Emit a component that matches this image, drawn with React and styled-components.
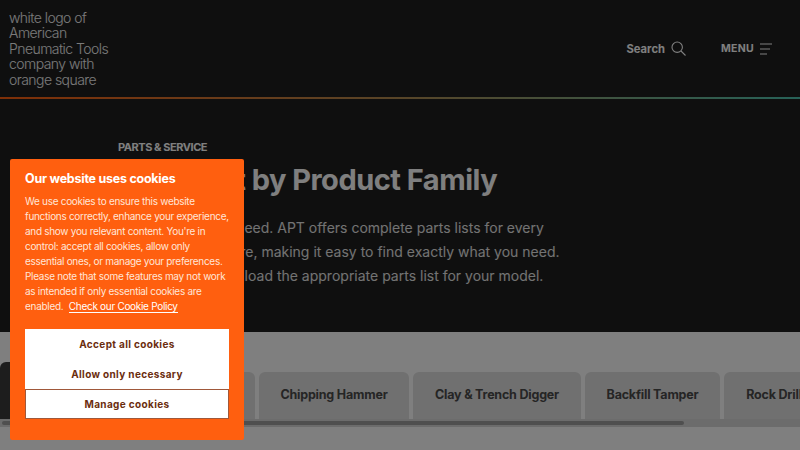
import React from "react";
import styled, { createGlobalStyle } from "styled-components";

const GlobalStyle = createGlobalStyle`
  html, body {
    margin: 0;
    padding: 0;
    height: 100%;
    overflow: hidden;
    background: #1f1f1f;
    font-family: "Inter", "Liberation Sans", sans-serif;
  }
`;

const tabs = [
  { label: "Breaker", width: 150, active: true },
  { label: "Rock Drill", width: 101 },
  { label: "Chipping Hammer", width: 150 },
  { label: "Clay & Trench Digger", width: 168 },
  { label: "Backfill Tamper", width: 135 },
  { label: "Rock Drill", width: 100 },
];

const App = () => {
  return (
    <Page>
      <GlobalStyle />
      <Header>
        <Logo>white logo of American Pneumatic Tools company with orange square</Logo>
        <Nav>
          <NavItem>
            <SearchLabel>Search</SearchLabel>
            <svg width="15" height="15" viewBox="0 0 15 15" fill="none" stroke="#fff" strokeWidth="1.1">
              <circle cx="6.2" cy="6.2" r="5.2" />
              <path d="M10 10 14.5 14.5" />
            </svg>
          </NavItem>
          <NavItem>
            <MenuLabel>MENU</MenuLabel>
            <svg width="12" height="12" viewBox="0 0 12 12" fill="none" stroke="#fff" strokeWidth="1.1">
              <path d="M0 1H12M0 6H10M0 11H7" />
            </svg>
          </NavItem>
        </Nav>
      </Header>
      <GradientLine />
      <Hero>
        <Eyebrow>PARTS &amp; SERVICE</Eyebrow>
        <Title>Parts List by Product Family</Title>
        <Lead>
          Get the parts you need. APT offers complete parts lists for every
          <br />
          tool we manufacture, making it easy to find exactly what you need.
          <br />
          Just find and download the appropriate parts list for your model.
        </Lead>
      </Hero>
      <TabSection>
        <TabRow>
          {tabs.map((tab, i) => (
            <Tab key={i} $active={tab.active} style={{ width: tab.width }}>
              {tab.label}
            </Tab>
          ))}
        </TabRow>
        <ScrollTrack>
          <ScrollThumb />
        </ScrollTrack>
      </TabSection>
      <Dim />
      <CookieBanner>
        <CookieTitle>Our website uses cookies</CookieTitle>
        <CookieText>
          We use cookies to ensure this website
          <br />
          functions correctly, enhance your experience,
          <br />
          and show you relevant content. You're in
          <br />
          control: accept all cookies, allow only
          <br />
          essential ones, or manage your preferences.
          <br />
          Please note that some features may not work
          <br />
          as intended if only essential cookies are
          <br />
          enabled. <CookieLink>Check our Cookie Policy</CookieLink>
        </CookieText>
        <CookieButtons>
          <CookieButton>Accept all cookies</CookieButton>
          <CookieButton>Allow only necessary</CookieButton>
          <CookieButton $outlined>Manage cookies</CookieButton>
        </CookieButtons>
      </CookieBanner>
    </Page>
  );
};

export default App;

const Page = styled.div`
  position: relative;
  width: 800px;
  height: 450px;
  overflow: hidden;
  background: #1f1f1f;
  color: #fff;
`;

const Header = styled.header`
  display: flex;
  justify-content: space-between;
  align-items: center;
  height: 97px;
  padding: 0 28px 0 9px;
`;

const Logo = styled.div`
  width: 104px;
  font-size: 14px;
  font-weight: 300;
  letter-spacing: -0.55px;
  line-height: 15.5px;
  color: #f4f4f4;
`;

const Nav = styled.nav`
  display: flex;
  align-items: center;
  gap: 35px;
`;

const NavItem = styled.div`
  display: flex;
  align-items: center;
  gap: 6px;
`;

const SearchLabel = styled.span`
  font-size: 11.2px;
  font-weight: 700;
`;

const MenuLabel = styled(SearchLabel)`
  font-size: 10.5px;
  letter-spacing: 0.3px;
`;

const GradientLine = styled.div`
  height: 2px;
  background: linear-gradient(90deg, #ff5f0f 0%, #b08a50 50%, #4fc4b0 100%);
`;

const Hero = styled.section`
  height: 233px;
  padding: 40px 0 0 118px;
  box-sizing: border-box;
`;

const Eyebrow = styled.div`
  font-size: 11px;
  font-weight: 700;
  line-height: 16px;
  letter-spacing: -0.45px;
`;

const Title = styled.h1`
  margin: 7px 0 0;
  font-size: 29px;
  font-weight: 700;
  letter-spacing: -0.5px;
  line-height: 36px;
  white-space: nowrap;
`;

const Lead = styled.p`
  margin: 18px 0 0;
  font-size: 14px;
  line-height: 24px;
  white-space: nowrap;
  color: #e6e6e6;
`;

const TabSection = styled.section`
  height: 118px;
  padding-top: 30px;
  box-sizing: border-box;
  background: #fff;
`;

const TabRow = styled.div`
  display: flex;
  align-items: flex-end;
  gap: 4px;
  height: 57px;
  overflow: hidden;
`;

const Tab = styled.div`
  flex: none;
  display: flex;
  align-items: center;
  justify-content: center;
  height: ${(p) => (p.$active ? "57px" : "47px")};
  border-radius: 6px 6px 0 0;
  box-sizing: border-box;
  padding-bottom: 2px;
  font-size: 12.5px;
  font-weight: 700;
  letter-spacing: -0.2px;
  white-space: nowrap;
  background: ${(p) => (p.$active ? "#3a3a3a" : "#e0e0e0")};
  color: ${(p) => (p.$active ? "#fff" : "#4a4a4a")};
`;

const ScrollTrack = styled.div`
  height: 8px;
  padding: 2px 0 0 2px;
  box-sizing: border-box;
  background: #d8d8d8;
`;

const ScrollThumb = styled.div`
  width: 682px;
  height: 4px;
  border-radius: 2px;
  background: #9e9e9e;
`;

const Dim = styled.div`
  position: absolute;
  inset: 0;
  background: rgba(0, 0, 0, 0.5);
`;

const CookieBanner = styled.aside`
  position: absolute;
  left: 10px;
  top: 159px;
  width: 234px;
  height: 281px;
  padding: 11px 15px 0;
  box-sizing: border-box;
  border-radius: 2px;
  background: #ff5f0f;
  color: #fff;
`;

const CookieTitle = styled.h2`
  margin: 0;
  font-size: 12.5px;
  font-weight: 700;
  line-height: 18px;
  letter-spacing: -0.25px;
`;

const CookieText = styled.p`
  margin: 6px 0 0;
  font-size: 10px;
  letter-spacing: -0.3px;
  line-height: 15px;
  white-space: nowrap;
  color: #ffe6d8;
`;

const CookieLink = styled.a`
  margin-left: 3px;
  color: #fff;
  border-bottom: 1px solid #fff;
`;

const CookieButtons = styled.div`
  display: flex;
  flex-direction: column;
  margin-top: 15px;
`;

const CookieButton = styled.button`
  height: 30px;
  margin: 0;
  padding: 0;
  font-family: inherit;
  font-size: 10px;
  font-weight: 700;
  letter-spacing: 0.35px;
  color: #6b2d0e;
  background: #fff;
  border: ${(p) => (p.$outlined ? "1px solid #a0583a" : "none")};
  border-radius: 0;
  box-sizing: border-box;
`;
